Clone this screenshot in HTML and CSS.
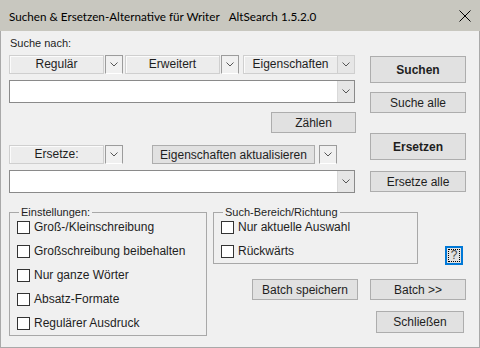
FILE: index.html
```html
<!DOCTYPE html>
<html lang="de">
<head>
    <meta charset="UTF-8">
    <title>AltSearch</title>
    <link rel="stylesheet" href="styles.css">
</head>
<body>
    <div class="titlebar">
        <span class="title">Suchen &amp; Ersetzen-Alternative für Writer</span>
        <span class="title title-version">AltSearch 1.5.2.0</span>
        <svg class="close" viewBox="0 0 12 12" width="12" height="12">
            <path d="M0.5 0.5 L11.5 11.5 M11.5 0.5 L0.5 11.5" stroke="#000" stroke-width="1" fill="none"/>
        </svg>
    </div>

    <div class="main">
        <div class="top">
            <div class="left-col">
                <div class="caption">Suche nach:</div>

                <div class="select-row">
                    <div class="select-box">Regulär</div>
                    <div class="drop-btn"><svg class="chev" viewBox="0 0 8 5" width="8" height="5"><polyline points="0.5,0.5 4,4 7.5,0.5"/></svg></div>
                    <div class="select-box next">Erweitert</div>
                    <div class="drop-btn"><svg class="chev" viewBox="0 0 8 5" width="8" height="5"><polyline points="0.5,0.5 4,4 7.5,0.5"/></svg></div>
                    <div class="select-box next wide-gap">Eigenschaften</div>
                    <div class="drop-flat"><svg class="chev" viewBox="0 0 8 5" width="8" height="5"><polyline points="0.5,0.5 4,4 7.5,0.5"/></svg></div>
                </div>

                <div class="combo">
                    <div class="combo-drop"><svg class="chev" viewBox="0 0 8 5" width="8" height="5"><polyline points="0.5,0.5 4,4 7.5,0.5"/></svg></div>
                </div>

                <button class="btn btn-count">Zählen</button>

                <div class="select-row replace-row">
                    <div class="select-box">Ersetze:</div>
                    <div class="drop-btn"><svg class="chev" viewBox="0 0 8 5" width="8" height="5"><polyline points="0.5,0.5 4,4 7.5,0.5"/></svg></div>
                    <button class="btn btn-props">Eigenschaften aktualisieren</button>
                    <div class="drop-btn props-drop"><svg class="chev" viewBox="0 0 8 5" width="8" height="5"><polyline points="0.5,0.5 4,4 7.5,0.5"/></svg></div>
                </div>

                <div class="combo">
                    <div class="combo-drop"><svg class="chev" viewBox="0 0 8 5" width="8" height="5"><polyline points="0.5,0.5 4,4 7.5,0.5"/></svg></div>
                </div>
            </div>

            <div class="right-col">
                <button class="btn btn-main">Suchen</button>
                <button class="btn btn-side">Suche alle</button>
                <button class="btn btn-main btn-replace">Ersetzen</button>
                <button class="btn btn-side">Ersetze alle</button>
            </div>
        </div>

        <div class="bottom">
            <div class="group group-settings">
                <span class="group-title">Einstellungen:</span>
                <div class="check-row"><span class="box"></span>Groß-/Kleinschreibung</div>
                <div class="check-row"><span class="box"></span>Großschreibung beibehalten</div>
                <div class="check-row"><span class="box"></span>Nur ganze Wörter</div>
                <div class="check-row"><span class="box"></span>Absatz-Formate</div>
                <div class="check-row"><span class="box"></span>Regulärer Ausdruck</div>
            </div>

            <div class="bottom-right">
                <div class="scope-row">
                    <div class="group group-scope">
                        <span class="group-title">Such-Bereich/Richtung</span>
                        <div class="check-row"><span class="box"></span>Nur aktuelle Auswahl</div>
                        <div class="check-row"><span class="box"></span>Rückwärts</div>
                    </div>
                    <button class="btn btn-help"><span class="focus">?</span></button>
                </div>

                <div class="batch-row">
                    <button class="btn btn-save">Batch speichern</button>
                    <button class="btn btn-batch">Batch &gt;&gt;</button>
                </div>

                <button class="btn btn-close">Schließen</button>
            </div>
        </div>
    </div>
</body>
</html>
```

FILE: styles.css
```css
* {
    margin: 0;
    padding: 0;
    box-sizing: border-box;
}

body {
    width: 480px;
    height: 348px;
    overflow: hidden;
    background: #f0f0f0;
    font-family: "Liberation Sans", Arial, sans-serif;
    font-size: 12px;
    color: #1e1e1e;
}

/* Fenstertitel */
.titlebar {
    height: 31px;
    background: #c8c7bf;
    display: flex;
    align-items: center;
    padding-left: 9px;
    font-family: Lato, "Liberation Sans", sans-serif;
    font-size: 11.7px;
    color: #000;
}

.title-version {
    margin-left: 9px;
}

.close {
    margin-left: auto;
    margin-right: 9px;
}

.main {
    height: 317px;
    border: 1px solid #a9a9a9;
    border-top: none;
    padding-left: 8px;
}

.top {
    display: flex;
}

.left-col {
    width: 346px;
    display: flex;
    flex-direction: column;
}

.caption {
    font-size: 11px;
    line-height: 13px;
    height: 13px;
    margin-top: 6px;
    margin-left: 1px;
}

.select-row {
    display: flex;
    height: 19px;
    margin-top: 5px;
}

.replace-row {
    margin-top: 12px;
}

.select-box {
    width: 95px;
    border: 1px solid #cfcfcf;
    box-shadow: inset 1px 1px #fbfbfb;
    background: #ececec;
    text-align: center;
    line-height: 17px;
}

.select-box.next {
    margin-left: 2px;
}

.select-box.wide-gap {
    margin-left: 4px;
}

.drop-btn {
    width: 18px;
    margin-left: 1px;
    border: 1px solid;
    border-color: #9c9c9c #9c9c9c #fff #9c9c9c;
    background: #f0f0f0;
    display: flex;
    align-items: center;
    justify-content: center;
}

.drop-flat {
    width: 17px;
    border: 1px solid #cfcfcf;
    border-left: none;
    background: #e6e6e6;
    display: flex;
    align-items: center;
    justify-content: center;
}

.chev polyline {
    fill: none;
    stroke: #555;
    stroke-width: 1;
}

.combo {
    height: 23px;
    margin-top: 6px;
    border: 1px solid #8a8a8a;
    background: #fff;
    display: flex;
    justify-content: flex-end;
}

.combo-drop {
    width: 17px;
    background: #e6e6e6;
    border-left: 1px solid #d9d9d9;
    display: flex;
    align-items: center;
    justify-content: center;
}

/* Schaltflächen */
.btn {
    font-family: "Liberation Sans", Arial, sans-serif;
    font-size: 12px;
    color: #1e1e1e;
    background: #e1e1e1;
    border: 1px solid #adadad;
}

.btn-count {
    width: 85px;
    height: 21px;
    margin-top: 9px;
    align-self: flex-end;
    margin-right: -1px;
}

.btn-props {
    width: 163px;
    margin-left: 29px;
}

.props-drop {
    margin-left: 4px;
}

.right-col {
    width: 96px;
    margin-left: 15px;
    display: flex;
    flex-direction: column;
}

.btn-main {
    height: 27px;
    margin-top: 25px;
    font-weight: bold;
}

.btn-replace {
    margin-top: 20px;
}

.btn-side {
    height: 21px;
    margin-top: 9px;
}

.btn-replace + .btn-side {
    margin-top: 11px;
}

/* Gruppen */
.bottom {
    display: flex;
    margin-top: 19px;
}

.group {
    position: relative;
    border: 1px solid #a8a8a8;
    padding-top: 2px;
}

.group-title {
    position: absolute;
    top: -7px;
    left: 9px;
    padding: 0 2px;
    background: #f0f0f0;
    font-size: 11px;
    line-height: 13px;
}

.group-settings {
    width: 198px;
    height: 124px;
}

.check-row {
    height: 24px;
    display: flex;
    align-items: center;
    padding-left: 7px;
    line-height: 14px;
}

.box {
    width: 13px;
    height: 13px;
    border: 1px solid #333;
    background: #fff;
    margin-right: 4px;
}

.bottom-right {
    width: 253px;
    margin-left: 6px;
    display: flex;
    flex-direction: column;
}

.scope-row {
    display: flex;
}

.group-scope {
    width: 205px;
    height: 52px;
}

.btn-help {
    width: 18px;
    height: 19px;
    margin-left: 27px;
    margin-top: 34px;
    border: 2px solid #0078d7;
    padding: 1px;
    display: flex;
}

.focus {
    flex: 1;
    border: 1px dotted #000;
    line-height: 11px;
    font-size: 12px;
    color: #444;
}

.batch-row {
    display: flex;
    margin-top: 14px;
}

.btn-save {
    width: 106px;
    height: 21px;
    margin-left: 39px;
}

.btn-batch {
    width: 96px;
    height: 21px;
    margin-left: 12px;
}

.btn-close {
    width: 88px;
    height: 22px;
    margin-top: 11px;
    margin-left: 163px;
}
```
